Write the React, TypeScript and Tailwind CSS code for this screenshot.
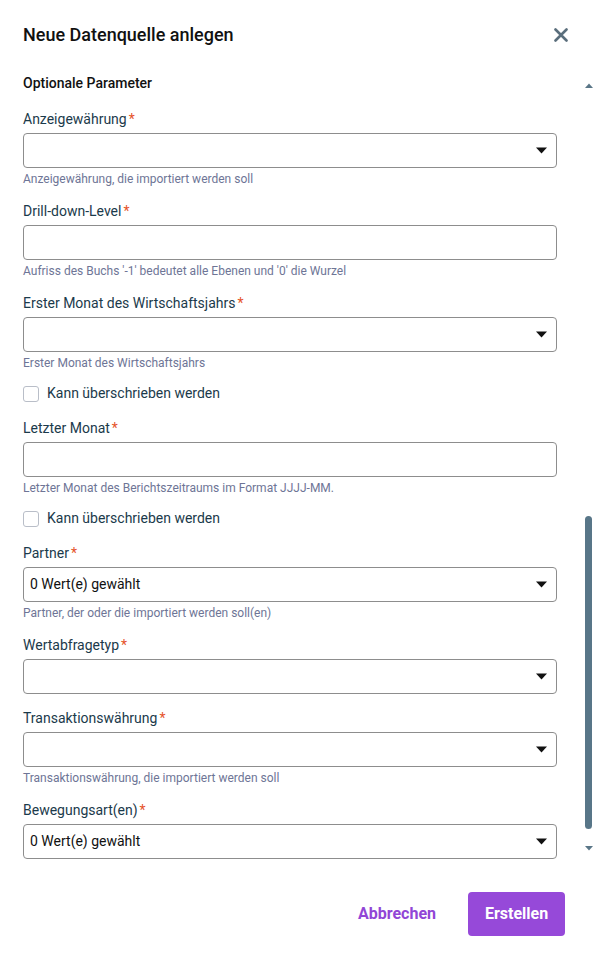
import React from "react";

type Field = {
  label: string;
  kind: "select" | "text";
  value?: string;
  helper?: string;
  checkbox?: boolean;
};

const fields: Field[] = [
  { label: "Anzeigewährung", kind: "select", helper: "Anzeigewährung, die importiert werden soll" },
  { label: "Drill-down-Level", kind: "text", helper: "Aufriss des Buchs '-1' bedeutet alle Ebenen und '0' die Wurzel" },
  { label: "Erster Monat des Wirtschaftsjahrs", kind: "select", helper: "Erster Monat des Wirtschaftsjahrs", checkbox: true },
  { label: "Letzter Monat", kind: "text", helper: "Letzter Monat des Berichtszeitraums im Format JJJJ-MM.", checkbox: true },
  { label: "Partner", kind: "select", value: "0 Wert(e) gewählt", helper: "Partner, der oder die importiert werden soll(en)" },
  { label: "Wertabfragetyp", kind: "select" },
  { label: "Transaktionswährung", kind: "select", helper: "Transaktionswährung, die importiert werden soll" },
  { label: "Bewegungsart(en)", kind: "select", value: "0 Wert(e) gewählt" },
];

function Caret() {
  return (
    <svg width="11" height="7" viewBox="0 0 11 7" className="shrink-0">
      <path d="M0 0.5 L11 0.5 L5.5 6.5 Z" fill="#111" />
    </svg>
  );
}

function FormField({ field }: { field: Field }) {
  return (
    <div className="flex flex-col">
      <label className="text-[14px] leading-[20px] text-[#1b3a4b]">
        {field.label}
        <span className="text-[#e5532a] ml-[2px]">*</span>
      </label>
      <div className="mt-[4px] h-[35px] rounded-[4px] border border-[#8d8d8d] bg-white flex items-center pl-[6px] pr-[9px]">
        <span className="flex-1 text-[14px] text-[#111]">{field.value}</span>
        {field.kind === "select" && <Caret />}
      </div>
      {field.helper && (
        <p className="mt-[3px] text-[12px] leading-[16px] text-[#6e7596]">{field.helper}</p>
      )}
      {field.checkbox && (
        <label className="mt-[12px] flex items-center gap-[8px] h-[21px]">
          <span className="w-[16px] h-[16px] rounded-[3px] border border-[#b9bec8] bg-white" />
          <span className="text-[14px] text-[#1b3a4b]">Kann überschrieben werden</span>
        </label>
      )}
    </div>
  );
}

export default function App() {
  return (
    <div className="w-[593px] h-[965px] bg-white flex flex-col font-['Roboto',sans-serif]">
      {/* Header */}
      <div className="flex items-center justify-between pl-[23px] pr-[25px] pt-[23px] h-[47px]">
        <h1 className="text-[18px] leading-[24px] font-medium text-[#111]">Neue Datenquelle anlegen</h1>
        <svg width="14" height="14" viewBox="0 0 14 14">
          <path d="M1.5 1.5 L12.5 12.5 M12.5 1.5 L1.5 12.5" stroke="#5a6e7c" strokeWidth="2.6" strokeLinecap="round" />
        </svg>
      </div>

      {/* Scroll area */}
      <div className="mt-[26px] flex h-[788px]">
        <div className="flex-1 pl-[23px] pr-[28px] flex flex-col overflow-hidden">
          <h2 className="text-[14px] leading-[20px] font-medium text-[#111]">Optionale Parameter</h2>
          <div className="mt-[16px] flex flex-col gap-[14px]">
            {fields.map((f) => (
              <FormField key={f.label} field={f} />
            ))}
          </div>
        </div>

        {/* Scrollbar */}
        <div className="w-[8px] flex flex-col items-center pt-[10px] pb-[10px]">
          <svg width="8" height="5" viewBox="0 0 8 5">
            <path d="M0 5 L4 0.5 L8 5 Z" fill="#5a7687" />
          </svg>
          <div className="flex-1 w-full flex flex-col">
            <div className="h-[428px]" />
            <div className="h-[313px] w-[7px] rounded-full bg-[#587688]" />
          </div>
          <svg width="8" height="5" viewBox="0 0 8 5">
            <path d="M0 0 L8 0 L4 4.5 Z" fill="#5a7687" />
          </svg>
        </div>
      </div>

      {/* Footer */}
      <div className="flex justify-end items-center gap-[12px] pr-[28px] mt-[31px]">
        <button className="h-[44px] px-[20px] text-[16px] font-bold text-[#9146d6]">Abbrechen</button>
        <button className="h-[44px] w-[97px] rounded-[4px] bg-[#9649d9] text-[16px] font-bold text-white">Erstellen</button>
      </div>
    </div>
  );
}
